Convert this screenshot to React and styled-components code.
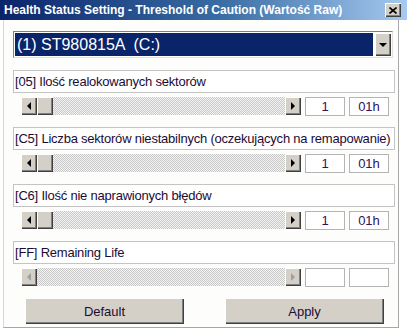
import React from 'react';
import styled, { createGlobalStyle } from 'styled-components';

const GlobalStyle = createGlobalStyle`
  html, body {
    margin: 0;
    padding: 0;
    background: #ffffff;
  }
  body {
    font-family: "Liberation Sans", Arial, sans-serif;
  }
`;

const Window = styled.div`
  width: 407px;
  height: 329px;
  display: flex;
  flex-direction: column;
  background: #ffffff;
`;

const TitleBar = styled.div`
  height: 20px;
  display: flex;
  align-items: center;
  justify-content: space-between;
  padding: 0 6px 0 4px;
  background: linear-gradient(to right, #0a246a 0%, #3a6ea5 55%, #a6caf0 100%);
  box-sizing: border-box;
`;

const Title = styled.span`
  color: #ffffff;
  font-family: "Liberation Sans", Arial, sans-serif;
  font-weight: bold;
  font-size: 12px;
  white-space: nowrap;
`;

const CloseButton = styled.div`
  width: 16px;
  height: 14px;
  background: #d4d0c8;
  box-shadow: inset 1px 1px #ffffff, inset -1px -1px #404040, inset -2px -2px #808080;
  display: flex;
  align-items: center;
  justify-content: center;
`;

const Client = styled.div`
  flex: 1;
  display: flex;
  flex-direction: column;
  margin: 0 8px 1px 3px;
  padding: 11px 3px 0 9px;
  background: #fdfdfb;
  border-left: 1px solid #d8d8d8;
  border-right: 1px solid #a8a8a8;
  border-bottom: 1px solid #a8a8a8;
`;

const Combo = styled.div`
  height: 23px;
  margin-right: 2px;
  display: flex;
  align-items: stretch;
  border: 1px solid;
  border-color: #808080 #e0e0e0 #e0e0e0 #808080;
  padding: 1px;
  background: #ffffff;
`;

const ComboValue = styled.div`
  flex: 1;
  background: #0a246a;
  color: #ffffff;
  font-size: 16px;
  display: flex;
  align-items: center;
  padding-left: 2px;
  white-space: pre;
`;

const ComboArrow = styled.div`
  width: 16px;
  margin-left: 2px;
  background: #d4d0c8;
  box-shadow: inset 1px 1px #ffffff, inset -1px -1px #404040, inset -2px -2px #808080;
  display: flex;
  align-items: center;
  justify-content: center;
`;

const Triangle = styled.span`
  width: 0;
  height: 0;
  border-style: solid;
  ${props =>
    props.dir === 'down'
      ? `border-width: 4px 4px 0 4px; border-color: #000 transparent transparent transparent;`
      : props.dir === 'left'
      ? `border-width: 4px 4px 4px 0; border-color: transparent ${props.off ? '#a0a0a0' : '#000'} transparent transparent;`
      : `border-width: 4px 0 4px 4px; border-color: transparent transparent transparent ${props.off ? '#a0a0a0' : '#000'};`}
`;

const Settings = styled.div`
  display: flex;
  flex-direction: column;
  gap: 11px;
  margin-top: 12px;
`;

const Setting = styled.div`
  display: flex;
  flex-direction: column;
  gap: 4px;
`;

const LabelBox = styled.div`
  height: 23px;
  box-sizing: border-box;
  border: 1px solid #c4c4c4;
  background: #ffffff;
  display: flex;
  align-items: center;
  padding-left: 1px;
  font-size: 13px;
  letter-spacing: -0.22px;
  color: #1c0c34;
  white-space: nowrap;
  overflow: hidden;
`;

const ControlRow = styled.div`
  display: flex;
  align-items: flex-start;
  gap: 4px;
  padding-left: 8px;
`;

const ScrollBar = styled.div`
  width: 280px;
  height: 18px;
  display: flex;
`;

const ScrollButton = styled.div`
  width: 16px;
  height: 18px;
  box-sizing: border-box;
  background: #d4d0c8;
  box-shadow: inset 1px 1px #ffffff, inset -1px -1px #404040, inset -2px -2px #808080;
  display: flex;
  align-items: center;
  justify-content: center;
`;

const Track = styled.div`
  flex: 1;
  background-color: #ffffff;
  background-image: repeating-conic-gradient(#c8c8c8 0 25%, #f4f4f4 0 50%);
  background-size: 2px 2px;
`;

const Edit = styled.div`
  width: 40px;
  height: 19px;
  box-sizing: border-box;
  border: 1px solid #b4b4b4;
  background: #ffffff;
  display: flex;
  align-items: center;
  justify-content: center;
  font-size: 13px;
  color: #34105a;
`;

const ButtonRow = styled.div`
  display: flex;
  gap: 41px;
  padding-left: 12px;
  margin-top: 11px;
`;

const PushButton = styled.button`
  width: 159px;
  height: 26px;
  border: none;
  background: #d4d0c8;
  box-shadow: inset 1px 1px #ffffff, inset -1px -1px #404040, inset -2px -2px #808080;
  font-family: "Liberation Sans", Arial, sans-serif;
  font-size: 13px;
  color: #1c0c34;
  padding: 0;
`;

const settings = [
  { code: '05', name: 'Ilość realokowanych sektorów', value: '1', hex: '01h' },
  {
    code: 'C5',
    name: 'Liczba sektorów niestabilnych (oczekujących na remapowanie)',
    value: '1',
    hex: '01h',
  },
  { code: 'C6', name: 'Ilość nie naprawionych błędów', value: '1', hex: '01h' },
  { code: 'FF', name: 'Remaining Life', value: '', hex: '', disabled: true },
];

const App = () => {
  return (
    <Window>
      <GlobalStyle />
      <TitleBar>
        <Title>Health Status Setting - Threshold of Caution (Wartość Raw)</Title>
        <CloseButton>
          <svg width="8" height="7" viewBox="0 0 8 7">
            <path d="M0.5 0.5 L7.5 6.5 M7.5 0.5 L0.5 6.5" stroke="#000" strokeWidth="1.6" fill="none" />
          </svg>
        </CloseButton>
      </TitleBar>
      <Client>
        <Combo>
          <ComboValue>(1) ST980815A  (C:)</ComboValue>
          <ComboArrow>
            <Triangle dir="down" />
          </ComboArrow>
        </Combo>
        <Settings>
          {settings.map(s => (
            <Setting key={s.code}>
              <LabelBox>
                [{s.code}] {s.name}
              </LabelBox>
              <ControlRow>
                <ScrollBar>
                  <ScrollButton>
                    <Triangle dir="left" off={s.disabled} />
                  </ScrollButton>
                  {!s.disabled && <ScrollButton />}
                  <Track />
                  <ScrollButton>
                    <Triangle dir="right" off={s.disabled} />
                  </ScrollButton>
                </ScrollBar>
                <Edit>{s.value}</Edit>
                <Edit>{s.hex}</Edit>
              </ControlRow>
            </Setting>
          ))}
        </Settings>
        <ButtonRow>
          <PushButton>Default</PushButton>
          <PushButton>Apply</PushButton>
        </ButtonRow>
      </Client>
    </Window>
  );
};

export default App;
